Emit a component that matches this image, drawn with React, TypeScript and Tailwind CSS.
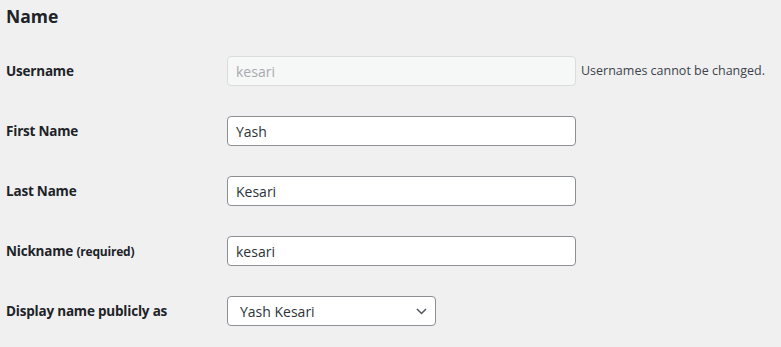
import { useState } from 'react';

const font = { fontFamily: '"Open Sans", "Liberation Sans", sans-serif' };

interface RowProps {
    label: React.ReactNode;
    children: React.ReactNode;
}

function Row({ label, children }: RowProps) {
    return (
        <div className="flex items-center h-[60px]">
            <div className="w-[221px] shrink-0 text-[13.5px] font-bold tracking-[-0.2px] text-[#1d2327]">{label}</div>
            <div className="flex items-center gap-[5px]">{children}</div>
        </div>
    );
}

export default function App() {
    const [first, setFirst] = useState('Yash');
    const [last, setLast] = useState('Kesari');
    const [nick, setNick] = useState('kesari');
    const [display, setDisplay] = useState('Yash Kesari');

    const inputClass =
        'w-[349px] h-[30px] px-2 rounded-[4px] border border-[#8c8f94] bg-white text-[14px] text-[#2c3338] outline-none';

    return (
        <div className="min-h-[347px] w-full bg-[#f0f0f1] pl-[6px] text-[#1d2327]" style={font}>
            <h2 className="h-8 leading-8 text-[17.5px] font-bold">Name</h2>
            <div className="mt-[9px]">
                <Row label="Username">
                    <input
                        value="kesari"
                        disabled
                        readOnly
                        className="w-[349px] h-[30px] px-2 rounded-[4px] border border-[#dcdcde] bg-[#f6f7f7] text-[14px] text-[#a7aaad] outline-none"
                    />
                    <span className="text-[12.5px] text-[#3c434a]">Usernames cannot be changed.</span>
                </Row>
                <Row label="First Name">
                    <input value={first} onChange={(e) => setFirst(e.target.value)} className={inputClass} />
                </Row>
                <Row label="Last Name">
                    <input value={last} onChange={(e) => setLast(e.target.value)} className={inputClass} />
                </Row>
                <Row
                    label={
                        <>
                            Nickname <span className="text-[12px]">(required)</span>
                        </>
                    }
                >
                    <input value={nick} onChange={(e) => setNick(e.target.value)} className={inputClass} />
                </Row>
                <Row label="Display name publicly as">
                    <div className="relative">
                        <select
                            value={display}
                            onChange={(e) => setDisplay(e.target.value)}
                            className="appearance-none w-[209px] h-[30px] pl-3 pr-6 rounded-[4px] border border-[#8c8f94] bg-white text-[14px] text-[#2c3338] outline-none"
                        >
                            <option>Yash Kesari</option>
                            <option>kesari</option>
                            <option>Yash</option>
                            <option>Kesari</option>
                        </select>
                        <svg
                            className="absolute right-[9px] top-[12px] pointer-events-none"
                            width="11"
                            height="7"
                            viewBox="0 0 11 7"
                            fill="none"
                        >
                            <path d="M1 1l4.5 4.5L10 1" stroke="#50575e" strokeWidth="1.5" />
                        </svg>
                    </div>
                </Row>
            </div>
        </div>
    );
}
